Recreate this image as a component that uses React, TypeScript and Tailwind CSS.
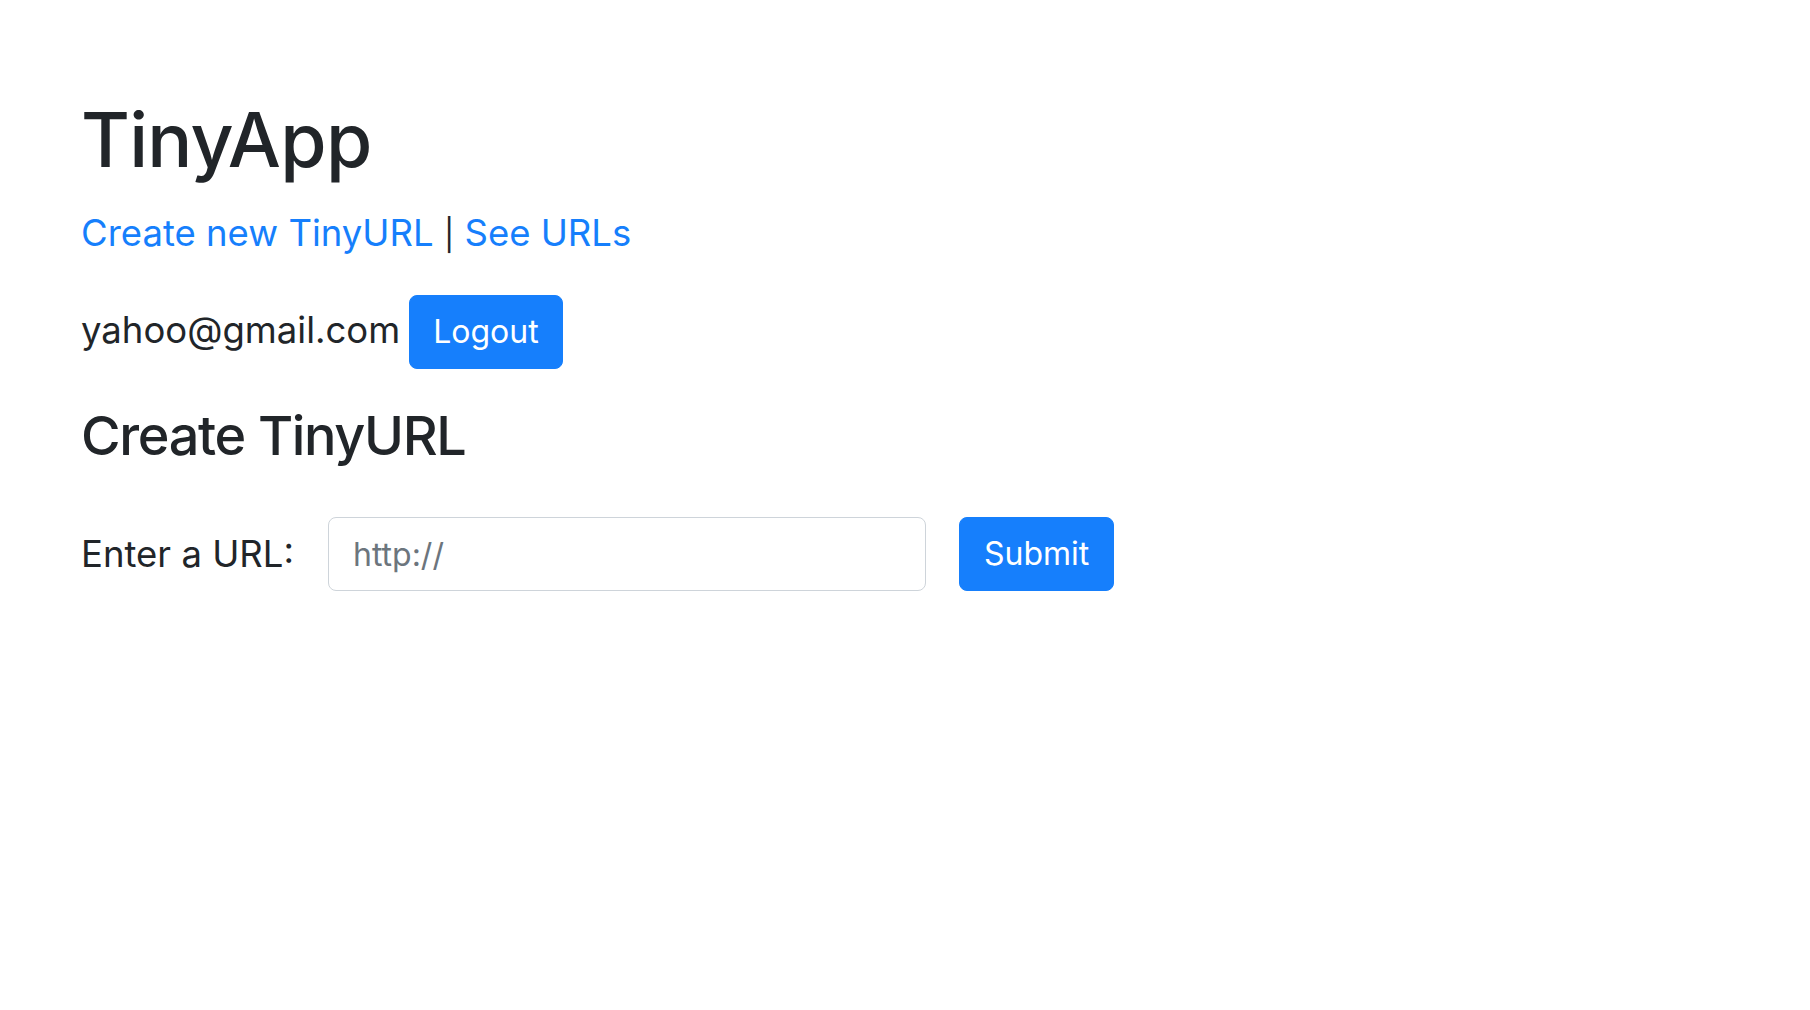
export default function App() {
    return (
        <div className="min-h-screen bg-white text-[#212529] px-[81px] pt-[95px]" style={{ fontFamily: 'Inter, "Liberation Sans", sans-serif' }}>
            <h1 className="text-[75px] font-medium leading-[90px] tracking-[-0.01em] m-0">TinyApp</h1>

            <div className="mt-[21px] text-[36.5px] leading-[55px]">
                <a href="#" className="text-[#167ffc]">Create new TinyURL</a>
                <span> <span className="text-[31px]">|</span> </span>
                <a href="#" className="text-[#167ffc]">See URLs</a>
            </div>

            <div className="mt-[33px] flex items-baseline gap-[9px]">
                <span className="text-[36.5px] leading-[55px]">yahoo@gmail.com</span>
                <button className="bg-[#167ffc] text-white text-[32px] leading-[48px] px-[23px] py-[12px] border border-[#167ffc] rounded-[8px]">
                    Logout
                </button>
            </div>

            <h3 className="mt-[34px] text-[54px] font-medium leading-[65px] tracking-[-0.025em]">Create TinyURL</h3>

            <form className="mt-[49px] flex items-center" onSubmit={(e) => e.preventDefault()}>
                <label className="text-[36.5px] leading-[54px] mr-[34px]">Enter a URL:</label>
                <input
                    type="text"
                    placeholder="http://"
                    className="w-[598px] h-[74px] border border-[#ced4da] rounded-[8px] px-[24px] text-[32px] placeholder:text-[#6c757d] outline-none"
                />
                <button type="submit" className="ml-[33px] bg-[#167ffc] text-white text-[32px] leading-[48px] px-[24px] py-[12px] border border-[#167ffc] rounded-[8px]">
                    Submit
                </button>
            </form>
        </div>
    )
}
